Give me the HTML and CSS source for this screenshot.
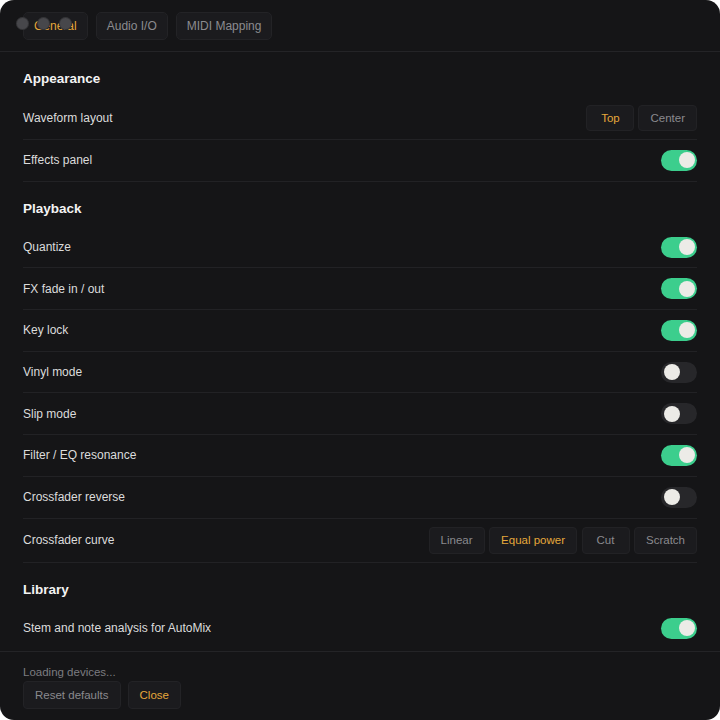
FILE: index.html
```html
<!DOCTYPE html>
<html>
<head>
<meta charset="utf-8">
<link rel="stylesheet" href="styles.css">
</head>
<body>
<div class="window">
  <div class="dots"><span class="dot"></span><span class="dot"></span><span class="dot"></span></div>
  <header class="tabs">
    <button class="tab active">General</button>
    <button class="tab">Audio I/O</button>
    <button class="tab">MIDI Mapping</button>
  </header>
  <main class="content">
    <section class="section">
      <h2 class="heading">Appearance</h2>
      <div class="row"><span class="label">Waveform layout</span>
        <div class="seg"><button class="opt active">Top</button><button class="opt">Center</button></div></div>
      <div class="row"><span class="label">Effects panel</span><span class="toggle on"><span class="knob"></span></span></div>
    </section>
    <section class="section">
      <h2 class="heading">Playback</h2>
      <div class="row"><span class="label">Quantize</span><span class="toggle on"><span class="knob"></span></span></div>
      <div class="row"><span class="label">FX fade in / out</span><span class="toggle on"><span class="knob"></span></span></div>
      <div class="row"><span class="label">Key lock</span><span class="toggle on"><span class="knob"></span></span></div>
      <div class="row"><span class="label">Vinyl mode</span><span class="toggle"><span class="knob"></span></span></div>
      <div class="row"><span class="label">Slip mode</span><span class="toggle"><span class="knob"></span></span></div>
      <div class="row"><span class="label">Filter / EQ resonance</span><span class="toggle on"><span class="knob"></span></span></div>
      <div class="row"><span class="label">Crossfader reverse</span><span class="toggle"><span class="knob"></span></span></div>
      <div class="row"><span class="label">Crossfader curve</span>
        <div class="seg wide"><button class="opt">Linear</button><button class="opt active">Equal power</button><button class="opt">Cut</button><button class="opt">Scratch</button></div></div>
    </section>
    <section class="section">
      <h2 class="heading">Library</h2>
      <div class="row last"><span class="label">Stem and note analysis for AutoMix</span><span class="toggle on"><span class="knob"></span></span></div>
    </section>
  </main>
  <footer class="footer">
    <div class="status">Loading devices...</div>
    <div class="actions">
      <button class="btn">Reset defaults</button>
      <button class="btn primary">Close</button>
    </div>
  </footer>
</div>
</body>
</html>
```
FILE: styles.css
```css
* { box-sizing: border-box; }
html, body { margin: 0; padding: 0; background: #ffffff; }
body { font-family: "Liberation Sans", Arial, sans-serif; }
.window {
  position: relative;
  width: 720px;
  height: 720px;
  background: #151517;
  border-radius: 14px;
  overflow: hidden;
  display: flex;
  flex-direction: column;
}
.dots {
  position: absolute;
  left: 15.5px;
  top: 16.5px;
  display: flex;
  gap: 8.5px;
}
.dot {
  width: 13px;
  height: 13px;
  border-radius: 50%;
  background: #47474b;
  box-shadow: inset 0 0 0 1px rgba(0,0,0,0.25);
}
.tabs {
  display: flex;
  gap: 8px;
  padding: 12px 23px 11px;
  border-bottom: 1px solid #242427;
}
button {
  font-family: inherit;
  cursor: pointer;
}
.tab {
  height: 28px;
  padding: 0 10px;
  background: #1b1b1e;
  border: 1px solid #232326;
  border-radius: 5px;
  color: #8b8b8f;
  font-size: 12px;
}
.tab.active { color: #e5a83b; }
.content {
  flex: 1;
  padding: 0 23px;
  overflow: hidden;
}
.heading {
  margin: 0;
  padding: 18px 0 10px;
  font-size: 13.5px;
  line-height: 17px;
  font-weight: bold;
  color: #f3f3f3;
}
.row {
  display: flex;
  align-items: center;
  justify-content: space-between;
  min-height: 41.7px;
  padding: 8px 0;
  border-bottom: 1px solid #222225;
}
.row.last { border-bottom: none; }
.label {
  font-size: 12px;
  color: #dcdcdc;
}
.seg {
  display: flex;
  gap: 4px;
}
.seg.wide { gap: 4.5px; }
.opt {
  height: 26px;
  min-width: 48px;
  padding: 0 11px;
  background: #1b1b1e;
  border: 1px solid #222225;
  border-radius: 4px;
  color: #8a8a8e;
  font-size: 11.5px;
}
.seg.wide .opt { height: 27px; }
.opt.active { color: #e5a83b; }
.toggle {
  display: flex;
  align-items: center;
  width: 36px;
  height: 21px;
  padding: 0 2.5px;
  border-radius: 11px;
  background: #27272a;
}
.toggle.on {
  background: #3cce8d;
  justify-content: flex-end;
}
.knob {
  width: 16px;
  height: 16px;
  border-radius: 50%;
  background: #ecebe7;
}
.footer {
  border-top: 1px solid #242427;
  padding: 12px 23px 11px;
}
.status {
  font-size: 11.5px;
  line-height: 16px;
  color: #7c7c80;
  margin-bottom: 1px;
}
.actions {
  display: flex;
  gap: 7px;
}
.btn {
  height: 28px;
  padding: 0 11px;
  background: #1b1b1e;
  border: 1px solid #232326;
  border-radius: 4px;
  color: #8a8a8e;
  font-size: 11.5px;
}
.btn.primary { color: #e5a83b; }
```
